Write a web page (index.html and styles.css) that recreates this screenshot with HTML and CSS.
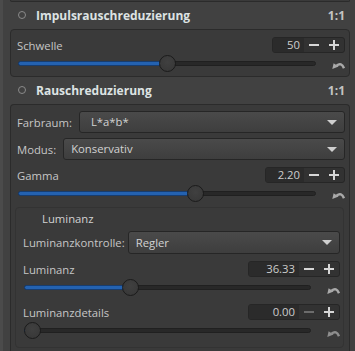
FILE: index.html
```html
<!DOCTYPE html>
<html lang="de">
<head>
  <meta charset="UTF-8">
  <meta name="viewport" content="width=device-width, initial-scale=1.0">
  <title>Rauschreduzierung</title>
  <link rel="stylesheet" href="styles.css">
</head>
<body>
  <div class="panel">
    <div class="frame-stub"></div>

    <div class="tool-header">
      <span class="tool-toggle"></span>
      <span class="tool-title">Impulsrauschreduzierung</span>
      <span class="tool-zoom">1:1</span>
    </div>
    <div class="frame frame-impulse">
      <div class="row">
        <span class="label">Schwelle</span>
        <div class="spin">
          <span class="spin-value short">50</span>
          <span class="spin-btn"><svg width="10" height="10" viewBox="0 0 10 10"><rect x="0" y="4" width="10" height="2"/></svg></span>
          <span class="spin-btn"><svg width="10" height="10" viewBox="0 0 10 10"><rect x="0" y="4" width="10" height="2"/><rect x="4" y="0" width="2" height="10"/></svg></span>
        </div>
      </div>
      <div class="slider-row">
        <div class="slider-track" style="--pos: 0.503">
          <div class="slider-fill"></div>
          <div class="slider-thumb"></div>
        </div>
        <svg class="reset" width="13" height="9" viewBox="0 0 13 9"><path d="M4.5 4.6 Q9.5 0.8 12 7.2" fill="none" stroke-width="2.4"/><path d="M0.3 8 L1.6 2.2 L6.6 5.6 Z" stroke="none"/></svg>
      </div>
    </div>

    <div class="tool-header">
      <span class="tool-toggle"></span>
      <span class="tool-title">Rauschreduzierung</span>
      <span class="tool-zoom">1:1</span>
    </div>
    <div class="frame frame-noise">
      <div class="combo-row">
        <span class="label">Farbraum:</span>
        <div class="combo combo-wide-pad">L*a*b*<span class="combo-arrow"></span></div>
      </div>
      <div class="combo-row">
        <span class="label">Modus:</span>
        <div class="combo">Konservativ<span class="combo-arrow"></span></div>
      </div>
      <div class="row row-spaced">
        <span class="label">Gamma</span>
        <div class="spin">
          <span class="spin-value mid">2.20</span>
          <span class="spin-btn"><svg width="10" height="10" viewBox="0 0 10 10"><rect x="0" y="4" width="10" height="2"/></svg></span>
          <span class="spin-btn"><svg width="10" height="10" viewBox="0 0 10 10"><rect x="0" y="4" width="10" height="2"/><rect x="4" y="0" width="2" height="10"/></svg></span>
        </div>
      </div>
      <div class="slider-row">
        <div class="slider-track" style="--pos: 0.602">
          <div class="slider-fill"></div>
          <div class="slider-thumb"></div>
        </div>
        <svg class="reset" width="13" height="9" viewBox="0 0 13 9"><path d="M4.5 4.6 Q9.5 0.8 12 7.2" fill="none" stroke-width="2.4"/><path d="M0.3 8 L1.6 2.2 L6.6 5.6 Z" stroke="none"/></svg>
      </div>

      <div class="subframe">
        <div class="subframe-title">Luminanz</div>
        <div class="combo-row">
          <span class="label">Luminanzkontrolle:</span>
          <div class="combo">Regler<span class="combo-arrow"></span></div>
        </div>
        <div class="row row-spaced">
          <span class="label">Luminanz</span>
          <div class="spin">
            <span class="spin-value long">36.33</span>
            <span class="spin-btn"><svg width="10" height="10" viewBox="0 0 10 10"><rect x="0" y="4" width="10" height="2"/></svg></span>
            <span class="spin-btn"><svg width="10" height="10" viewBox="0 0 10 10"><rect x="0" y="4" width="10" height="2"/><rect x="4" y="0" width="2" height="10"/></svg></span>
          </div>
        </div>
        <div class="slider-row tall">
          <div class="slider-track" style="--pos: 0.3633">
            <div class="slider-fill"></div>
            <div class="slider-thumb"></div>
          </div>
          <svg class="reset" width="13" height="9" viewBox="0 0 13 9"><path d="M4.5 4.6 Q9.5 0.8 12 7.2" fill="none" stroke-width="2.4"/><path d="M0.3 8 L1.6 2.2 L6.6 5.6 Z" stroke="none"/></svg>
        </div>
        <div class="row row-near">
          <span class="label">Luminanzdetails</span>
          <div class="spin">
            <span class="spin-value long">0.00</span>
            <span class="spin-btn disabled"><svg width="10" height="10" viewBox="0 0 10 10"><rect x="0" y="4" width="10" height="2"/></svg></span>
            <span class="spin-btn"><svg width="10" height="10" viewBox="0 0 10 10"><rect x="0" y="4" width="10" height="2"/><rect x="4" y="0" width="2" height="10"/></svg></span>
          </div>
        </div>
        <div class="slider-row tall">
          <div class="slider-track" style="--pos: 0">
            <div class="slider-fill"></div>
            <div class="slider-thumb"></div>
          </div>
          <svg class="reset dim" width="13" height="9" viewBox="0 0 13 9"><path d="M4.5 4.6 Q9.5 0.8 12 7.2" fill="none" stroke-width="2.4"/><path d="M0.3 8 L1.6 2.2 L6.6 5.6 Z" stroke="none"/></svg>
        </div>
      </div>
    </div>
  </div>
</body>
</html>
```
FILE: styles.css
```css
html, body {
    height: 100%;
}

body {
    margin: 0;
    background-color: #414141;
    color: #c6c6c6;
    font-family: "Open Sans", "Noto Sans", sans-serif;
    font-size: 11.3px;
    overflow: hidden;
}

.panel {
    display: flex;
    flex-direction: column;
    border-left: 3px solid #4b4b4b;
    padding: 0 5px 0 7px;
    height: 100%;
}

/* bottom edge of the tool above */
.frame-stub {
    height: 1px;
    flex-shrink: 0;
    background: #3a3a3a;
    border: 1px solid #2b2b2b;
    border-top: none;
    border-radius: 0 0 4px 4px;
}

.tool-header {
    display: flex;
    align-items: center;
    height: 27px;
    flex-shrink: 0;
    padding: 0 5px 1px 8px;
    box-sizing: border-box;
}

.tool-toggle {
    width: 8px;
    height: 8px;
    border: 1.5px solid #8a8a8a;
    border-radius: 50%;
    box-sizing: border-box;
    margin-right: 10px;
}

.tool-title {
    flex: 1;
    font-weight: bold;
    font-size: 12px;
    color: #dde3e3;
}

.tool-zoom {
    font-weight: bold;
    font-size: 12px;
    color: #c4c4c4;
}

.frame {
    flex-shrink: 0;
    background: #3a3a3a;
    border: 1px solid #2b2b2b;
    border-radius: 4px;
    padding: 7px 4px 3px 6px;
}

.frame-noise {
    padding-top: 6px;
    flex: 1;
    border-bottom: none;
    border-radius: 4px 4px 0 0;
}

.row {
    display: flex;
    align-items: center;
    justify-content: space-between;
    height: 16px;
}

.row-spaced {
    margin-top: 7px;
}

.row-near {
    margin-top: 6px;
}

.label {
    white-space: nowrap;
}

/* spin button */
.spin {
    display: flex;
    height: 16px;
    border: 1px solid #262626;
    border-radius: 3px;
    box-sizing: border-box;
    background: #323232;
    overflow: hidden;
}

.spin-value {
    background: #2b2b2b;
    text-align: right;
    padding-right: 4px;
    box-sizing: border-box;
    line-height: 14px;
    color: #cdcdcd;
}

.spin-value.short { width: 31px; }
.spin-value.mid { width: 38px; }
.spin-value.long { width: 50px; }

.spin-btn {
    width: 20px;
    display: flex;
    align-items: center;
    justify-content: center;
    fill: #d6d6d6;
}

.spin-btn.disabled {
    fill: #6c6c6c;
}

/* slider */
.slider-row {
    display: flex;
    align-items: center;
    height: 20px;
}

.slider-row.tall {
    height: 21px;
}

.slider-track {
    position: relative;
    flex: 1;
    height: 5px;
    margin-left: 1px;
    margin-right: 16px;
    background: #282828;
    border: 1px solid #202020;
    border-radius: 3px;
    box-sizing: border-box;
}

.slider-fill {
    position: absolute;
    left: -1px;
    top: -1px;
    height: 5px;
    width: calc(var(--pos) * (100% - 15px) + 8.5px);
    background: #2462b0;
    border: 1px solid #173d70;
    border-radius: 3px;
    box-sizing: border-box;
}

.slider-thumb {
    position: absolute;
    top: -7px;
    left: calc(var(--pos) * (100% - 15px) - 1px);
    width: 17px;
    height: 17px;
    border-radius: 50%;
    background: radial-gradient(circle at 50% 40%, #404040, #363636);
    border: 1px solid #1b1b1b;
    box-sizing: border-box;
}

.reset {
    width: 13px;
    flex-shrink: 0;
    margin-top: 5px;
    fill: #a9a9a9;
    stroke: #a9a9a9;
}

.reset.dim {
    fill: #8e8e8e;
    stroke: #8e8e8e;
}

/* combo box */
.combo-row {
    display: flex;
    align-items: center;
    gap: 7px;
    height: 22px;
}

.combo-row + .combo-row {
    margin-top: 5px;
}

.combo {
    position: relative;
    flex: 1;
    height: 22px;
    line-height: 20px;
    padding-left: 7px;
    box-sizing: border-box;
    border: 1px solid #262626;
    border-radius: 3px;
    background: linear-gradient(#4a4a4a, #3e3e3e);
    color: #d2d2d2;
}

.combo-wide-pad {
    padding-left: 11px;
}

.combo-arrow {
    position: absolute;
    right: 7px;
    top: 8px;
    width: 0;
    height: 0;
    border-left: 5px solid transparent;
    border-right: 5px solid transparent;
    border-top: 5px solid #cfcfcf;
}

/* nested group */
.subframe {
    margin: 4px 1px 0 -2px;
    padding: 0 3px 6px 7px;
    border: 1px solid #333333;
    border-radius: 4px;
    background: #3a3a3a;
}

.subframe-title {
    height: 21px;
    line-height: 21px;
    margin-bottom: 2px;
    padding-left: 19px;
    color: #d2d2d2;
}

.subframe .combo-row {
    height: 23px;
    gap: 3px;
}

.subframe .combo {
    height: 23px;
    line-height: 21px;
}
```
